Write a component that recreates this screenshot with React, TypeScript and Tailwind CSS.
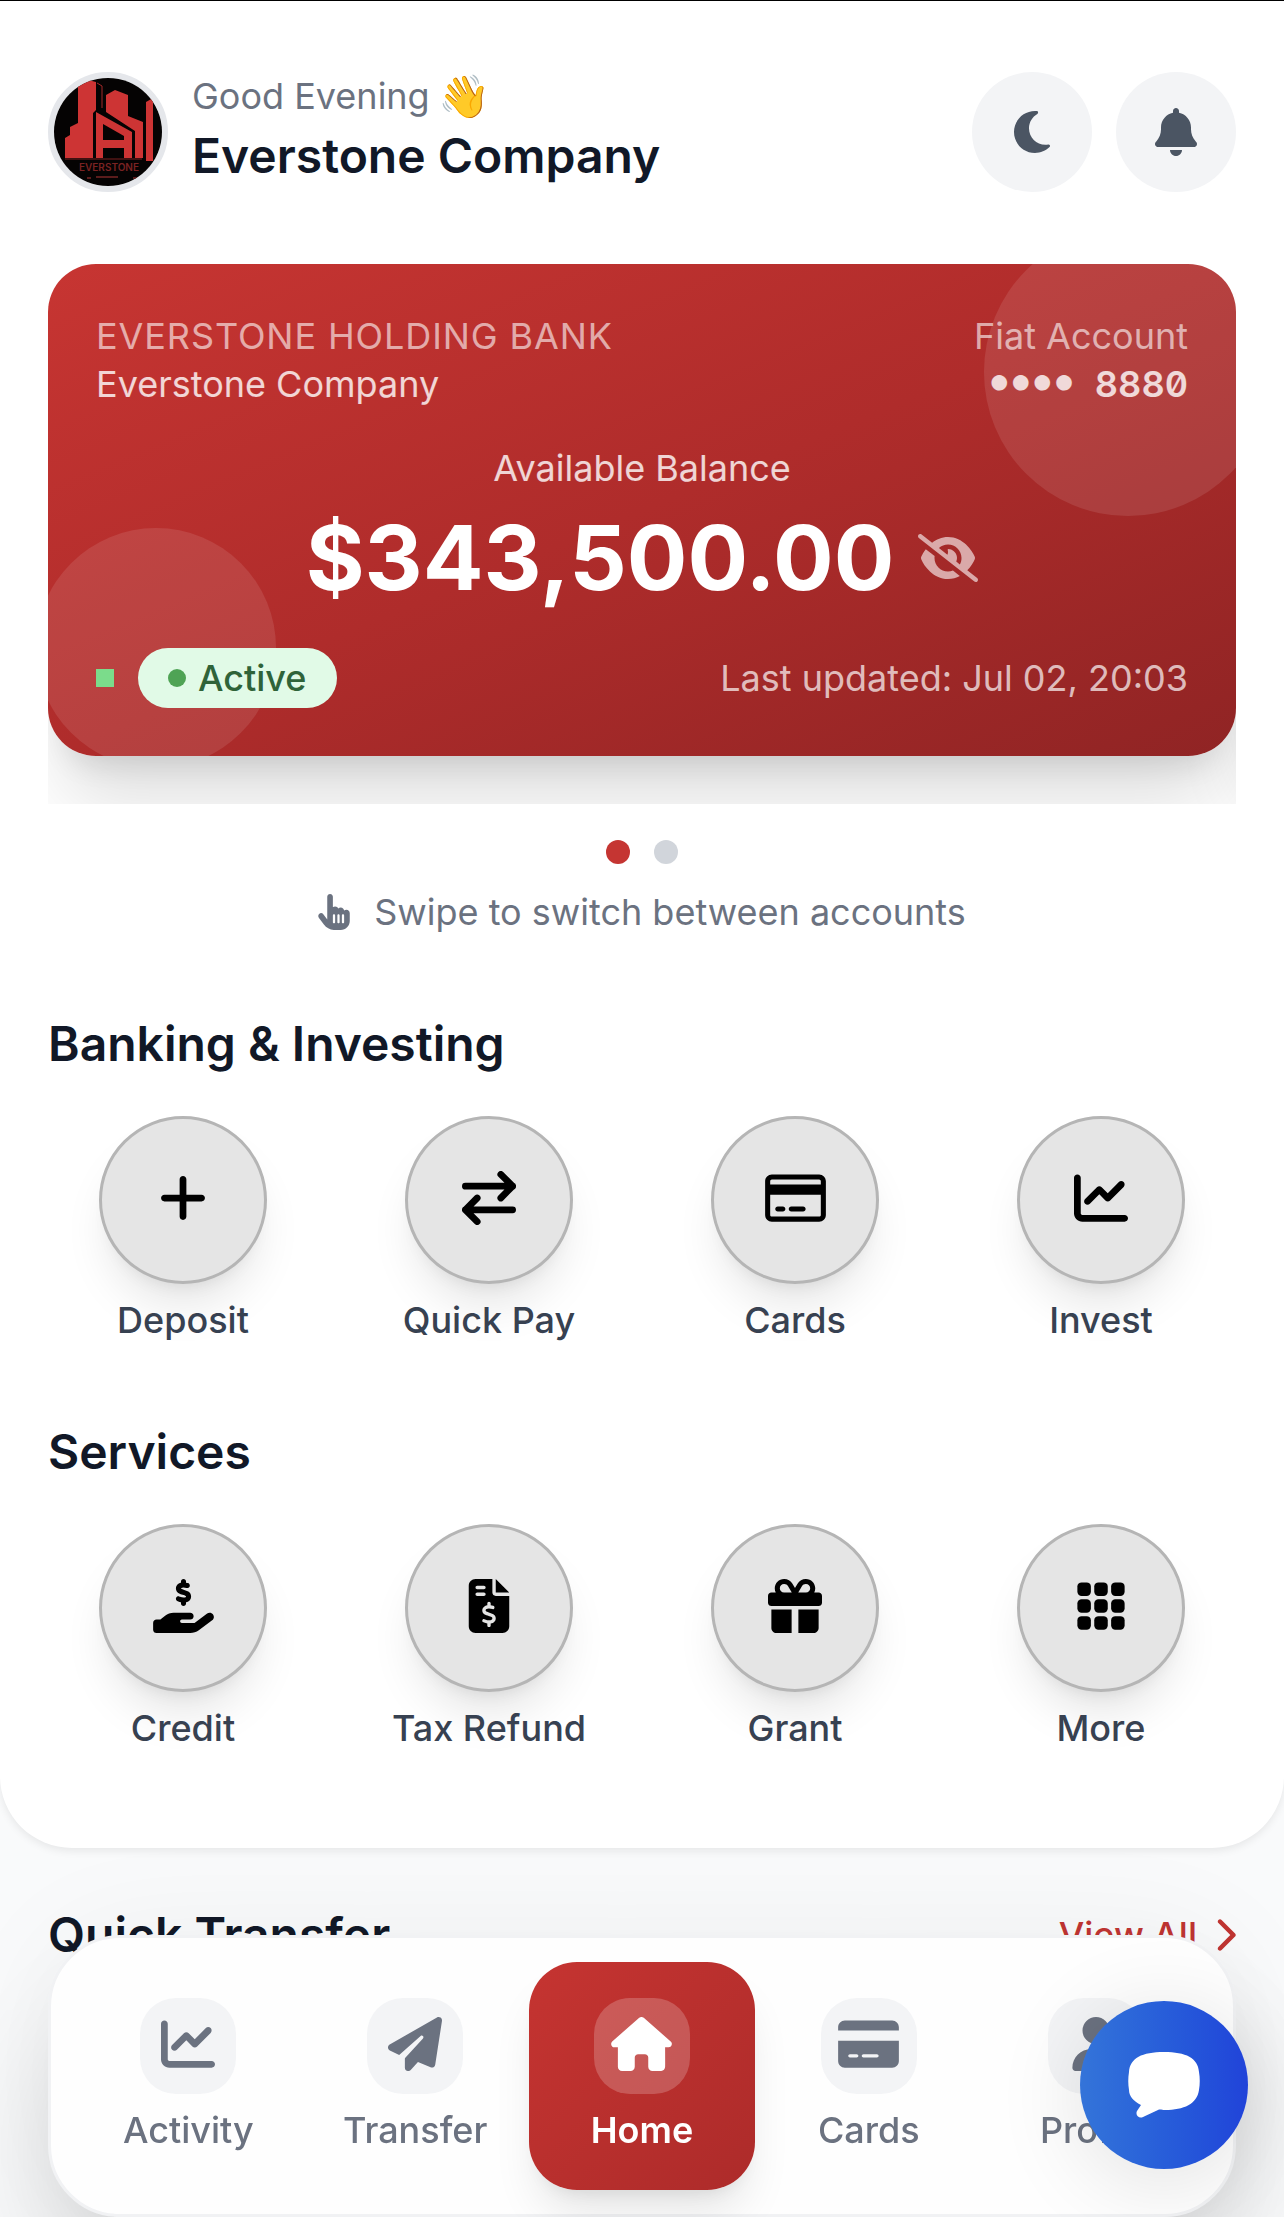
import type { ReactNode } from "react";
import {
  FaBell,
  FaChartLine,
  FaChevronRight,
  FaCreditCard,
  FaEyeSlash,
  FaFileInvoiceDollar,
  FaGift,
  FaHandHoldingDollar,
  FaHandPointer,
  FaHouse,
  FaMoon,
  FaPaperPlane,
  FaPlus,
  FaRegCreditCard,
  FaUser,
} from "react-icons/fa6";

function CompanyLogo() {
  return (
    <svg viewBox="0 0 108 108" className="size-full" role="img" aria-label="Everstone logo">
      <rect width="108" height="108" fill="#050303" />
      <g fill="#cd3434">
        <path d="M11 80V60L16 57V49L24 45V7L34 2L42 4V32L39 35V80Z" />
        <path d="M52 34V17L61 12L74 17V38L89 44V80H81V53Z" />
        <path d="M92 24L99 20V83H92Z" />
        <path fillRule="evenodd" d="M42 34L78 54V80H70V70H49V80H42ZM49 46L70 58V62H49Z" />
      </g>
      <path d="M43 5L48 8V30" fill="none" stroke="#a32a2a" strokeWidth="1" />
      <path d="M11 81H88" fill="none" stroke="#7a2020" strokeWidth="1" />
      <text x="55" y="93" textAnchor="middle" fontFamily="Inter, sans-serif" fontSize="10" fontWeight="600" fill="#7a2222">
        EVERSTONE
      </text>
      <path d="M33 100h4M42 99h22M79 100h4" stroke="#5a1c1c" strokeWidth="2" />
    </svg>
  );
}

function SwapIcon({ className }: { className?: string }) {
  return (
    <svg
      viewBox="0 0 512 512"
      className={className}
      fill="none"
      stroke="currentColor"
      strokeWidth="64"
      strokeLinecap="round"
      strokeLinejoin="round"
      aria-hidden="true"
    >
      <path d="M32 144H480M368 32L480 144L368 256M480 368H32M144 256L32 368L144 480" />
    </svg>
  );
}

function GridIcon({ className }: { className?: string }) {
  const cells = [32, 192, 352];
  return (
    <svg viewBox="0 0 512 512" className={className} fill="currentColor" aria-hidden="true">
      {cells.map((y) => cells.map((x) => <rect key={`${x}-${y}`} x={x} y={y} width="128" height="128" rx="40" />))}
    </svg>
  );
}

function ChatIcon() {
  return (
    <svg viewBox="0 0 72 66" className="h-[66px] w-[72px]" fill="currentColor" aria-hidden="true">
      <path d="M36 0C58 0 70 6 71 20C72 26 72 32 71 38C69 52 56 58 37 58C34 58 32 57 30 58L15 65C11 67 7 63 9 59L13 53C5 49 1 44 1 38C0 32 0 26 1 20C2 6 14 0 36 0Z" />
    </svg>
  );
}

function Tile({ label, children }: { label: string; children: ReactNode }) {
  return (
    <button type="button" className="flex flex-col items-center gap-3 text-black">
      <span className="flex size-42 items-center justify-center rounded-full border-3 border-[#b5b5b5] bg-[#e5e5e5] pb-1 shadow-[0_30px_45px_-9px_rgba(0,0,0,0.1),0_12px_18px_-12px_rgba(0,0,0,0.1)]">
        {children}
      </span>
      <span className="text-4xl/12 font-medium whitespace-nowrap text-[#374151]">{label}</span>
    </button>
  );
}

function NavItem({ label, active = false, children }: { label: string; active?: boolean; children: ReactNode }) {
  return (
    <a
      href="#"
      aria-current={active ? "page" : undefined}
      className={
        active
          ? "flex flex-1 flex-col items-center gap-3 rounded-[48px] bg-linear-to-br from-[#c53431] to-[#ad2b2a] py-9 font-semibold text-white shadow-[0_30px_45px_-9px_rgba(0,0,0,0.1),0_12px_18px_-12px_rgba(0,0,0,0.1)]"
          : "flex flex-1 flex-col items-center gap-3 rounded-[48px] py-9 font-medium text-[#6b7280]"
      }
    >
      <span
        className={
          active
            ? "flex size-24 items-center justify-center rounded-[36px] bg-white/20 pb-1"
            : "flex size-24 items-center justify-center rounded-[36px] bg-[#f3f4f6] pb-1"
        }
      >
        {children}
      </span>
      <span className="text-4xl/12">{label}</span>
    </a>
  );
}

const cardShadow = "shadow-[0_60px_75px_-15px_rgba(0,0,0,0.13),0_24px_30px_-18px_rgba(0,0,0,0.12)]";

export default function App() {
  return (
    <div className="min-h-screen overflow-hidden bg-[#f9fafb] font-['Inter',sans-serif] text-[#111827]">
      <main>
        <div className="rounded-b-[72px] border-t border-black bg-white px-12 pt-[71px] pb-24 shadow-[0_3px_9px_rgba(0,0,0,0.08)]">
          <header className="flex items-center justify-between">
            <div className="flex items-center gap-6">
              <div className="size-30 overflow-hidden rounded-full border-6 border-[#e5e7eb]">
                <CompanyLogo />
              </div>
              <div>
                <p className="flex items-center gap-2 text-4xl/12 text-[#6b7280]">
                  Good Evening
                  <span className="text-[42px]/12">👋</span>
                </p>
                <h1 className="text-5xl/18 font-semibold">Everstone Company</h1>
              </div>
            </div>
            <div className="flex gap-6 text-[#4b5563]">
              <button type="button" aria-label="Toggle dark mode" className="flex size-30 items-center justify-center rounded-full bg-[#f3f4f6]">
                <FaMoon className="size-12" />
              </button>
              <button type="button" aria-label="Notifications" className="flex size-30 items-center justify-center rounded-full bg-[#f3f4f6]">
                <FaBell className="size-12" />
              </button>
            </div>
          </header>

          <section aria-label="Accounts" className="mt-18 flex overflow-hidden pb-12">
            <article className={`relative w-full shrink-0 rounded-[48px] bg-linear-to-br from-[#c73532] via-[#af2c2b] to-[#902424] text-4xl/12 text-white ${cardShadow}`}>
              <div className="absolute inset-0 overflow-hidden rounded-[48px]" aria-hidden="true">
                <div className="absolute -top-9 -right-9 size-72 rounded-full bg-white/10" />
                <div className="absolute -bottom-3 -left-3 size-60 rounded-full bg-white/10" />
              </div>
              <div className="relative p-12">
                <div className="flex justify-between">
                  <div>
                    <p className="tracking-wide text-white/60">EVERSTONE HOLDING BANK</p>
                    <p className="text-white/80">Everstone Company</p>
                  </div>
                  <div className="text-right">
                    <p className="text-white/60">Fiat Account</p>
                    <p className="flex justify-end gap-5 font-semibold text-white/80 tabular-nums slashed-zero">
                      <span className="font-['Liberation_Mono',monospace] font-normal">●●●●</span>
                      8880
                    </p>
                  </div>
                </div>
                <p className="mt-9 text-center text-white/80">Available Balance</p>
                <div className="mt-3 flex items-center justify-center gap-6">
                  <p className="text-[90px]/27 font-bold">$343,500.00</p>
                  <button type="button" aria-label="Hide balance" className="text-white/60">
                    <FaEyeSlash className="h-12 w-15" />
                  </button>
                </div>
                <div className="mt-9 flex items-center justify-between">
                  <div className="flex items-center gap-6">
                    <span className="size-[18px] bg-[#7bdc8b]" />
                    <span className="flex h-15 items-center gap-3 rounded-full bg-[#e1fae7] px-[30px] font-medium text-[#2f6339]">
                      <span className="size-[18px] rounded-full bg-[#4fa355]" />
                      Active
                    </span>
                  </div>
                  <p className="text-white/70">Last updated: Jul 02, 20:03</p>
                </div>
              </div>
            </article>
            <article aria-hidden="true" className={`w-full shrink-0 rounded-[48px] bg-[#c53030] ${cardShadow}`} />
          </section>

          <div className="mt-9 flex justify-center gap-6">
            <button type="button" aria-label="Account 1" className="size-6 rounded-full bg-[#c53532]" />
            <button type="button" aria-label="Account 2" className="size-6 rounded-full bg-[#d1d5db]" />
          </div>
          <p className="mt-6 flex items-center justify-center gap-6 text-4xl/12 text-[#6b7280]">
            <FaHandPointer className="h-9 w-8" />
            Swipe to switch between accounts
          </p>

          <section className="mt-18">
            <h2 className="text-5xl/18 font-semibold">Banking &amp; Investing</h2>
            <div className="mt-9 grid grid-cols-4 gap-9">
              <Tile label="Deposit">
                <FaPlus className="size-[54px]" />
              </Tile>
              <Tile label="Quick Pay">
                <SwapIcon className="size-[54px]" />
              </Tile>
              <Tile label="Cards">
                <FaRegCreditCard className="h-[54px] w-[61px]" />
              </Tile>
              <Tile label="Invest">
                <FaChartLine className="size-[54px]" />
              </Tile>
            </div>
          </section>

          <section className="mt-18">
            <h2 className="text-5xl/18 font-semibold">Services</h2>
            <div className="mt-9 grid grid-cols-4 gap-9">
              <Tile label="Credit">
                <FaHandHoldingDollar className="h-[54px] w-[61px]" />
              </Tile>
              <Tile label="Tax Refund">
                <FaFileInvoiceDollar className="size-[54px]" />
              </Tile>
              <Tile label="Grant">
                <FaGift className="size-[54px]" />
              </Tile>
              <Tile label="More">
                <GridIcon className="size-[54px]" />
              </Tile>
            </div>
          </section>
        </div>

        <section className="flex items-center justify-between px-12 pt-[51px]">
          <h2 className="text-5xl/18 font-semibold">Quick Transfer</h2>
          <a href="#" className="flex items-center gap-4 text-4xl/12 font-medium text-[#c03532]">
            View All
            <FaChevronRight className="h-9 w-[23px]" />
          </a>
        </section>
      </main>

      <nav
        aria-label="Main"
        className="fixed inset-x-12 bottom-0 flex rounded-[72px] border-3 border-[#f1f2f4] bg-[#fefefe] p-6 shadow-[0_75px_150px_-36px_rgba(0,0,0,0.25),0_0_120px_rgba(0,0,0,0.05)]"
      >
        <NavItem label="Activity">
          <FaChartLine className="size-[54px]" />
        </NavItem>
        <NavItem label="Transfer">
          <FaPaperPlane className="size-[54px]" />
        </NavItem>
        <NavItem label="Home" active>
          <FaHouse className="h-[54px] w-[61px]" />
        </NavItem>
        <NavItem label="Cards">
          <FaCreditCard className="h-[54px] w-[61px]" />
        </NavItem>
        <NavItem label="Profile">
          <FaUser className="size-[54px]" />
        </NavItem>
      </nav>

      <button
        type="button"
        aria-label="Open chat"
        className="fixed right-9 bottom-12 flex size-42 items-center justify-center rounded-full bg-linear-to-r from-[#3474d9] to-[#2143d9] text-white shadow-[0_12px_90px_rgba(0,0,0,0.12)]"
      >
        <ChatIcon />
      </button>
    </div>
  );
}
